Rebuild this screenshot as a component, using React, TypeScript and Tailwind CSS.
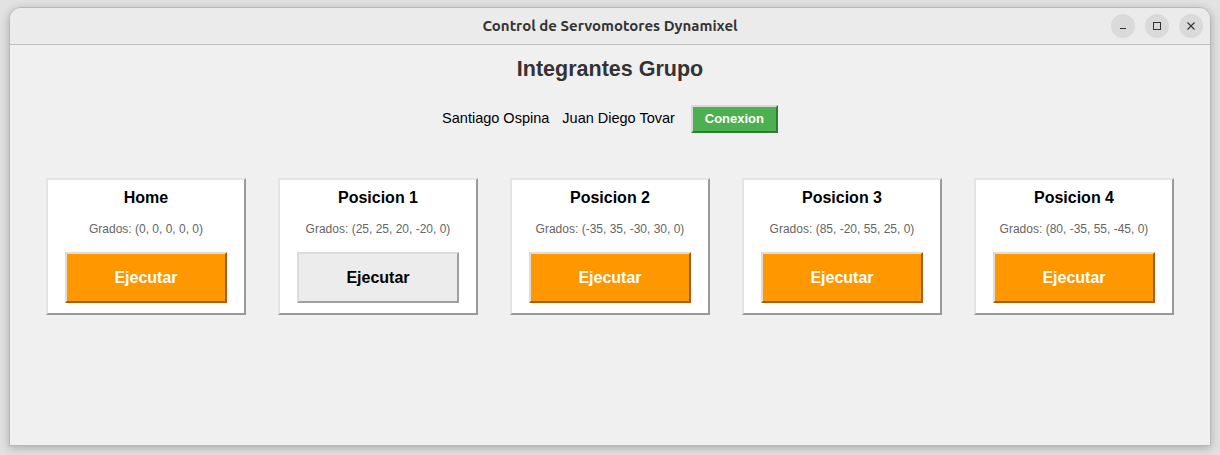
const positions = [
  { name: "Home", grados: "(0, 0, 0, 0, 0)", active: true },
  { name: "Posicion 1", grados: "(25, 25, 20, -20, 0)", active: false },
  { name: "Posicion 2", grados: "(-35, 35, -30, 30, 0)", active: true },
  { name: "Posicion 3", grados: "(85, -20, 55, 25, 0)", active: true },
  { name: "Posicion 4", grados: "(80, -35, 55, -45, 0)", active: true },
];

function WinButton({ children }: { children: React.ReactNode }) {
  return (
    <div className="flex h-6 w-6 items-center justify-center rounded-full bg-[#dadada] text-[#333]">
      {children}
    </div>
  );
}

function PositionCard({ name, grados, active }: { name: string; grados: string; active: boolean }) {
  return (
    <div className="flex w-[200px] flex-col items-center border-2 border-t-[#e4e4e4] border-l-[#e4e4e4] border-b-[#999] border-r-[#999] bg-white px-4 pb-[10px] pt-[7px]">
      <div className="text-[16px] font-bold leading-[22px] text-black">{name}</div>
      <div className="mt-[12px] text-[12px] leading-[16px] text-[#666]">Grados: {grados}</div>
      <button
        className={
          active
            ? "mt-[15px] h-[51px] w-[162px] border-2 border-t-[#ddd] border-l-[#ddd] border-b-[#a35f00] border-r-[#a35f00] bg-[#ff9800] text-[16px] font-bold text-white"
            : "mt-[15px] h-[51px] w-[162px] border-2 border-t-[#dcdcdc] border-l-[#dcdcdc] border-b-[#a0a0a0] border-r-[#a0a0a0] bg-[#ececec] text-[16px] font-bold text-black"
        }
      >
        Ejecutar
      </button>
    </div>
  );
}

export default function App() {
  return (
    <div className="h-[455px] w-[1220px] bg-[#e2e2e2] pl-[9px] pt-[7px] font-['Liberation_Sans',Arial,sans-serif]">
      <div className="flex h-[439px] w-[1202px] flex-col overflow-hidden rounded-t-[12px] border border-[#b8b8b8] bg-[#f0f0f0] shadow-[0_2px_10px_rgba(0,0,0,0.25)]">
        <div className="relative flex h-[37px] shrink-0 items-center justify-center border-b border-[#bdbdbd] bg-[#ebebeb]">
          <span className="font-['Ubuntu','Noto_Sans',sans-serif] text-[15px] font-bold text-[#333]">
            Control de Servomotores Dynamixel
          </span>
          <div className="absolute right-[7px] top-[6px] flex gap-[10px]">
            <WinButton>
              <svg width="10" height="10" viewBox="0 0 10 10">
                <path d="M2 7.5h6" stroke="#333" strokeWidth="1" />
              </svg>
            </WinButton>
            <WinButton>
              <svg width="10" height="10" viewBox="0 0 10 10">
                <rect x="1.5" y="1.5" width="7" height="7" fill="none" stroke="#333" strokeWidth="1" />
              </svg>
            </WinButton>
            <WinButton>
              <svg width="10" height="10" viewBox="0 0 10 10">
                <path d="M1.5 1.5l7 7M8.5 1.5l-7 7" stroke="#333" strokeWidth="1.1" />
              </svg>
            </WinButton>
          </div>
        </div>

        <div className="flex flex-col items-center">
          <h1 className="mt-[11px] text-[21.5px] font-bold leading-[26px] text-[#333]">Integrantes Grupo</h1>
          <div className="mt-[23px] flex items-center">
            <span className="text-[14.5px] text-black">Santiago Ospina</span>
            <span className="ml-[13px] text-[14.5px] text-black">Juan Diego Tovar</span>
            <button className="ml-[16px] h-[28px] w-[87px] border-2 border-t-[#d8d8d8] border-l-[#d8d8d8] border-b-[#2f7d32] border-r-[#2f7d32] bg-[#4caf50] text-[13px] font-bold text-white">
              Conexion
            </button>
          </div>
          <div className="mt-[45px] flex gap-[32px]">
            {positions.map((p) => (
              <PositionCard key={p.name} {...p} />
            ))}
          </div>
        </div>
      </div>
    </div>
  );
}
